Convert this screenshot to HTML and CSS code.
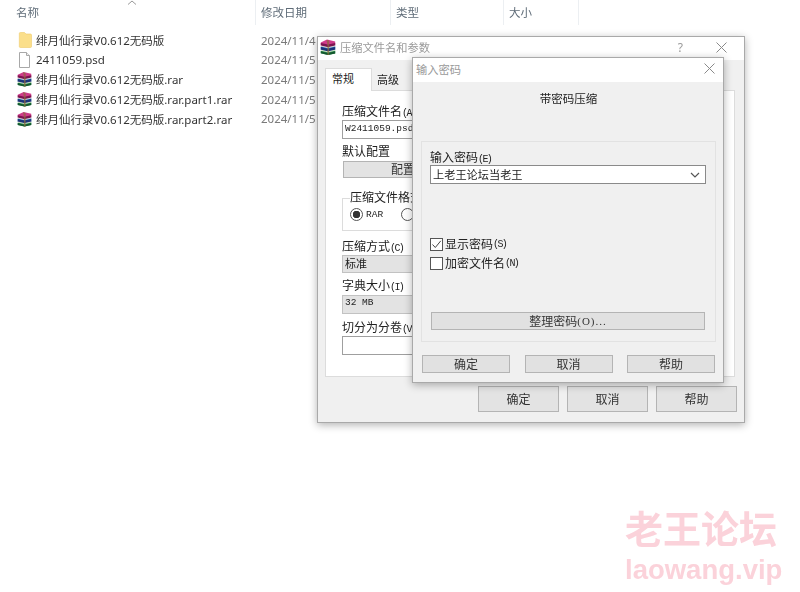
FILE: index.html
```html
<!DOCTYPE html>
<html lang="zh">
<head>
<meta charset="utf-8">
<title>压缩文件名和参数</title>
<link rel="stylesheet" href="styles.css">
</head>
<body>
<svg class="defs" width="0" height="0" aria-hidden="true">
  <defs>
    <symbol id="rar" viewBox="0 0 16 16">
      <path d="M.8 12 8 9.500 15.200 11.500V14.500L8 16 .8 14.300Z" fill="#2f9a58"/>
      <path d="M.8 12.300 8 14 15.200 12.300V14.500L8 16 .8 14.300Z" fill="#14572e"/>
      <path d="M.8 7.500 8 5 15.200 7V10.800L8 12.400 .8 10.800Z" fill="#2f6cc4"/>
      <path d="M.8 8 8 9.700 15.200 8V10.800L8 12.400 .8 10.800Z" fill="#1b3378"/>
      <path d="M.8 3.500 7 .5 15.200 2.500V6.500L8 8.200 .8 6.500Z" fill="#cf3a8a"/>
      <path d="M.8 3.900 8 5.600 15.200 3.900V6.500L8 8.200 .8 6.500Z" fill="#7c1650"/>
      <path d="M.8 7 8 8.700 15.200 7M.8 11.200 8 12.900 15.200 11.200" stroke="#e9e6d0" stroke-width=".9" fill="none"/>
      <path d="M6.500 .9 9.200 1.600 9.200 16 7.400 16 7.400 5.600Z" fill="#8a6a3c" opacity=".7"/>
    </symbol>
  </defs>
</svg>

<main class="explorer">
  <header class="columns">
    <div class="col col-name">名称<svg class="sort" width="10" height="5" viewBox="0 0 10 5"><path d="M1 4.500 5 1 9 4.500" fill="none" stroke="#9a9a9a"/></svg></div>
    <div class="col col-date">修改日期</div>
    <div class="col col-type">类型</div>
    <div class="col col-size">大小</div>
  </header>
  <ul class="files">
    <li class="file">
      <svg class="icon" viewBox="0 0 15 16"><path d="M1.300 1.500C1.300.9 1.700.5 2.300.5H6.500L8 2H12.500C13.100 2 13.500 2.400 13.500 3V14.500C13.500 15.100 13.100 15.500 12.500 15.500H2.300C1.700 15.500 1.300 15.100 1.300 14.500Z" fill="#fbdf8b" stroke="#efcb6c" stroke-width=".6"/></svg>
      <span class="fname">绯月仙行录V0.612无码版</span><span class="fdate">2024/11/4</span>
    </li>
    <li class="file">
      <svg class="icon" viewBox="0 0 15 16"><path d="M1.500.5H8.500L11.500 3.500V15.500H1.500Z" fill="#fff" stroke="#a8a8a8"/><path d="M8.500.5V3.500H11.500" fill="#eee" stroke="#a8a8a8"/></svg>
      <span class="fname">2411059.psd</span><span class="fdate">2024/11/5</span>
    </li>
    <li class="file">
      <svg class="icon rar-icon"><use href="#rar"/></svg>
      <span class="fname">绯月仙行录V0.612无码版.rar</span><span class="fdate">2024/11/5</span>
    </li>
    <li class="file">
      <svg class="icon rar-icon"><use href="#rar"/></svg>
      <span class="fname">绯月仙行录V0.612无码版.rar.part1.rar</span><span class="fdate">2024/11/5</span>
    </li>
    <li class="file">
      <svg class="icon rar-icon"><use href="#rar"/></svg>
      <span class="fname">绯月仙行录V0.612无码版.rar.part2.rar</span><span class="fdate">2024/11/5</span>
    </li>
  </ul>
</main>

<section class="win win-outer">
  <div class="titlebar">
    <svg class="app-icon"><use href="#rar"/></svg>
    <span class="title">压缩文件名和参数</span>
    <span class="help">?</span>
    <svg class="close" viewBox="0 0 11 11"><path d="M.5.5 10.500 10.500M10.500.5.500 10.500" stroke="#8a8a8a"/></svg>
  </div>
  <div class="outer-body">
    <div class="tabs">
      <span class="tab tab-on">常规</span>
      <span class="tab">高级</span>
    </div>
    <div class="panel">
      <label class="lbl lbl-file">压缩文件名<span class="k">(A)</span></label>
      <div class="field field-file mono">W2411059.psd</div>
      <label class="lbl lbl-preset">默认配置</label>
      <div class="btn btn-preset">配置</div>
      <fieldset class="fmt">
        <legend>压缩文件格式</legend>
        <div class="radios">
          <span class="radio radio-on"></span><span class="mono rar-lbl">RAR</span><span class="radio"></span>
        </div>
      </fieldset>
      <label class="lbl lbl-method">压缩方式<span class="k">(C)</span></label>
      <div class="combo combo-method">标准</div>
      <label class="lbl lbl-dict">字典大小<span class="k">(I)</span></label>
      <div class="combo combo-dict">32 MB</div>
      <label class="lbl lbl-split">切分为分卷<span class="k">(V)</span></label>
      <div class="field field-split"></div>
    </div>
    <div class="actions outer-actions">
      <span class="btn">确定</span><span class="btn">取消</span><span class="btn">帮助</span>
    </div>
  </div>
</section>

<section class="win win-inner">
  <div class="titlebar inner-bar">
    <span class="title">输入密码</span>
    <svg class="close" viewBox="0 0 11 11"><path d="M.5.5 10.500 10.500M10.500.5.500 10.500" stroke="#8a8a8a"/></svg>
  </div>
  <div class="inner-body">
    <h1 class="heading">带密码压缩</h1>
    <div class="group">
      <label class="lbl lbl-pass">输入密码<span class="k">(E)</span></label>
      <div class="pass-input"><span>上老王论坛当老王</span><svg width="10" height="6" viewBox="0 0 10 6"><path d="M1 1 5 5 9 1" fill="none" stroke="#555" stroke-width="1.200"/></svg></div>
      <div class="check check-first"><span class="box"><svg width="11" height="11" viewBox="0 0 11 11"><path d="M1.500 5.500 4.300 8.500 9.800 1.800" fill="none" stroke="#444"/></svg></span>显示密码<span class="k">(S)</span></div>
      <div class="check"><span class="box"></span>加密文件名<span class="k">(N)</span></div>
      <div class="btn btn-organize">整理密码<span class="tail">(O)...</span></div>
    </div>
    <div class="actions inner-actions">
      <span class="btn">确定</span><span class="btn">取消</span><span class="btn">帮助</span>
    </div>
  </div>
</section>

<aside class="mark">
  <div class="mark-cn">老王论坛</div>
  <div class="mark-en">laowang.vip</div>
</aside>
</body>
</html>
```
FILE: styles.css
```css
* { box-sizing: border-box; }
html, body { margin: 0; height: 592px; overflow: hidden; }
body {
  position: relative;
  width: 800px;
  background: #fff;
  font-family: "Noto Sans", "Noto Sans CJK SC", sans-serif;
  font-size: 12px;
  color: #222;
  filter: blur(.3px);
}
.defs { position: absolute; }

/* explorer */
.explorer { padding-left: 16px; }
.columns { display: flex; height: 30px; }
.col {
  height: 25px;
  line-height: 25px;
  color: #5f6c78;
  font-size: 11.500px;
  border-right: 1px solid #eceff2;
  position: relative;
}
.col-name { width: 240px; }
.col-date { width: 135px; padding-left: 5px; }
.col-type { width: 113px; padding-left: 5px; }
.col-size { width: 75px; padding-left: 5px; }
.sort { position: absolute; left: 111px; top: 0; }
.files { list-style: none; margin: 0; padding: .5px 0 0; }
.file { display: flex; align-items: center; height: 19.600px; padding-left: 2px; white-space: nowrap; }
.icon { width: 15px; height: 16px; flex: none; }
.rar-icon { margin-left: -1px; margin-right: 1px; }
.fname { width: 225px; margin-left: 3px; flex: none; color: #333; font-size: 11.500px; }
.fdate { color: #7a7a7a; font-size: 11.500px; }

/* windows (free canvas) */
.win {
  position: absolute;
  background: #f0f0f0;
  border: 1px solid #a9a9a9;
  box-shadow: 0 2px 8px rgba(0, 0, 0, .3);
}
.win-outer { left: 317px; top: 36px; width: 428px; height: 387px; }
.win-inner { left: 412px; top: 57px; width: 312px; height: 326px; }
.titlebar { display: flex; align-items: center; background: #fff; color: #9a9a9a; font-size: 11.250px; }
.win-outer .titlebar { height: 23px; padding: 0 17px 3px 2px; }
.app-icon { width: 16px; height: 16px; flex: none; }
.win-outer .title { margin-left: 4px; flex: 1; }
.help { margin-right: 33px; color: #9a9a9a; font-size: 12px; }
.close { width: 11px; height: 11px; flex: none; }
.inner-bar { height: 24px; padding: 0 8px 3px 3px; }
.inner-bar .title { flex: 1; }

.outer-body { padding: 8px 9px 0 7px; }
.tabs { display: flex; height: 23px; font-size: 11px; line-height: 14px; }
.tab { margin-left: 5px; padding-top: 5px; color: #222; }
.tab-on { width: 47px; margin-left: 0; padding: 3px 0 0 6px; background: #fff; border: 1px solid #dcdcdc; border-bottom: 0; position: relative; z-index: 1; }
.panel {
  display: flex; flex-direction: column; align-items: flex-start;
  height: 287px; margin-top: -1px; padding: 13px 0 0 16px;
  background: #fff; border: 1px solid #dcdcdc;
}
.lbl { display: block; height: 14px; font-size: 12px; line-height: 13px; color: #222; white-space: nowrap; }
.lbl-file, .lbl-method, .lbl-pass { line-height: 15px; }
.k { font-family: "Liberation Mono", monospace; font-size: 10px; letter-spacing: -1.600px; }
.tail { font-family: "Liberation Serif", serif; font-size: 11px; letter-spacing: 1px; }
.field { width: 120px; height: 19px; background: #fff; border: 1px solid #9f9f9f; flex: none; }
.field-file { margin-top: 2px; padding-left: 2px; font-size: 9.500px; line-height: 16px; }
.field-split { margin-top: 1px; }
.mono { font-family: "Liberation Mono", monospace; }
.lbl-preset { margin-top: 6px; }
.btn {
  display: flex; align-items: center; justify-content: center;
  background: #e1e1e1; border: 1px solid #b4b4b4; color: #333; font-size: 12px; white-space: nowrap;
}
.btn-preset { width: 120px; height: 17px; margin: 2px 0 0 1px; padding-bottom: 2px; background: #e3e3e3; }
.fmt {
  width: 120px; height: 40px; margin: 13px 0 0; padding: 2px 0 0 7px;
  border: 1px solid #dcdcdc; border-right: 0; min-width: 0;
}
.fmt legend { padding: 0; font-size: 12px; line-height: 13px; height: 14px; white-space: nowrap; }
.radios { display: flex; align-items: center; height: 14px; }
.radio { width: 13px; height: 13px; border: 1px solid #555; border-radius: 50%; background: #fff; flex: none; }
.radio-on { background: radial-gradient(circle, #333 0 3.500px, #fff 4px); }
.rar-lbl { margin: 0 18px 0 3px; font-size: 9.500px; }
.lbl-method { margin-top: 8px; }
.combo {
  width: 120px; height: 19px; margin-top: 2px; padding-left: 2px;
  background: #e3e3e3; border: 1px solid #c2c2c2; line-height: 17px; font-size: 11px;
}
.combo-method { height: 18px; line-height: 15px; }
.combo-dict { font-family: "Liberation Mono", monospace; font-size: 9.500px; line-height: 14px; }
.lbl-dict { margin-top: 6px; }
.lbl-split { margin-top: 7px; }
.outer-actions { margin: 9px 0 0 153px; gap: 8px; }
.outer-actions .btn { flex: none; width: 81px; height: 26px; background: #e3e3e3; }
.actions { display: flex; }

/* inner dialog */
.inner-body { padding: 0 7px 0 8px; }
.heading { margin: 10px 0 0; font-weight: 400; font-size: 11.500px; line-height: 14px; text-align: center; color: #222; height: 49px; }
.group {
  display: flex; flex-direction: column; align-items: flex-start;
  height: 201px; padding: 8px 0 0 8px;
  border: 1px solid #e2e2e2;
}
.pass-input {
  display: flex; align-items: center; justify-content: space-between;
  width: 276px; height: 19px; margin-top: 1px; padding: 0 5px 2px 2px;
  background: #fff; border: 1px solid #8a8a8a; font-size: 11.200px;
}
.pass-input svg { margin-top: 2px; }
.check { display: flex; align-items: center; height: 14px; margin-top: 5px; font-size: 12px; white-space: nowrap; }
.check-first { margin-top: 53px; }
.box { display: flex; align-items: center; justify-content: center; width: 13px; height: 13px; margin-right: 2px; background: #fff; border: 1px solid #555; }
.btn-organize { width: 274px; height: 18px; margin: 42px 0 0 1px; }
.inner-actions { margin: 13px 0 0 1px; gap: 14.500px; }
.inner-actions .btn { flex: none; width: 88px; height: 18px; }

/* watermark */
.mark {
  position: absolute; left: 625px; top: 506px; width: 160px;
  color: #fbd2da; font-weight: 700;
}
.mark-cn { font-family: "Noto Sans CJK SC", sans-serif; font-size: 38px; line-height: 42px; white-space: nowrap; }
.mark-en { font-family: "Liberation Sans", sans-serif; font-size: 27.500px; line-height: 44px; white-space: nowrap; }
```
